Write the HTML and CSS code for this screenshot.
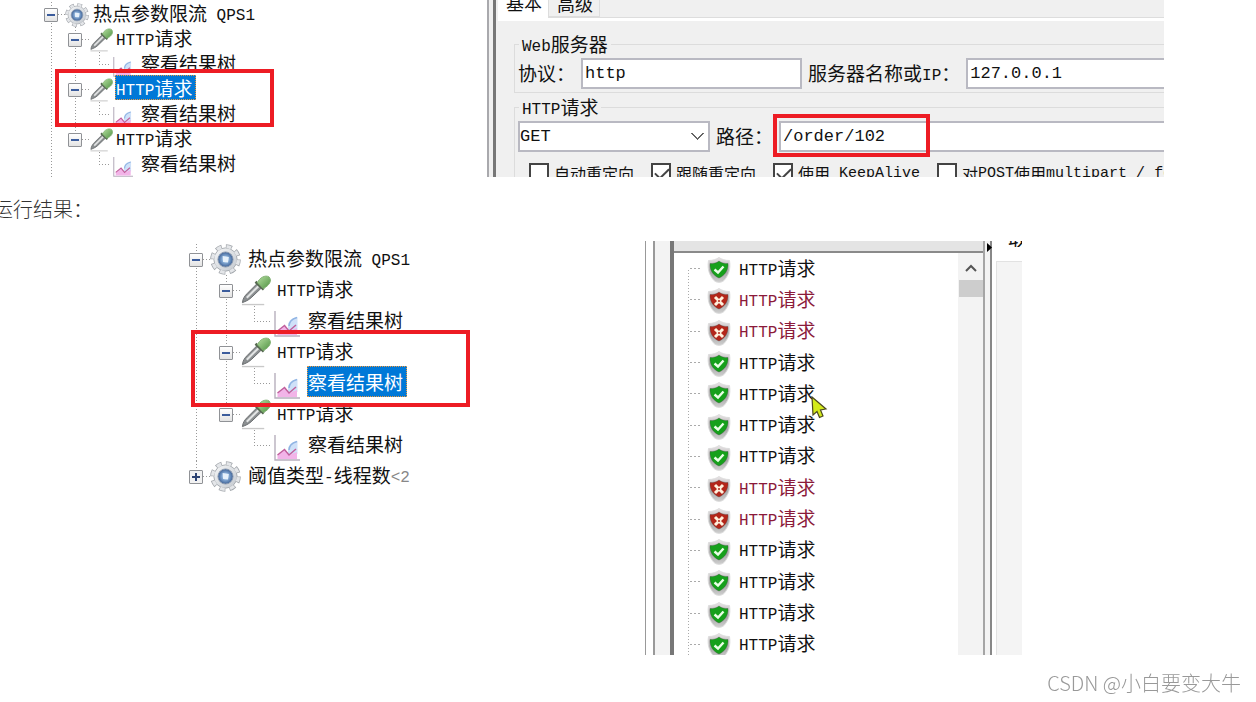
FILE: index.html
```
<!doctype html>
<html lang="zh-CN">
<head>
    <meta charset="UTF-8">
    <meta name="viewport" content="width=device-width,initial-scale=1">
    <title>热点参数限流</title>
    <link rel="stylesheet" href="styles.css">
</head>
<body>
    <svg class="sprite" width="0" height="0" aria-hidden="true">
        <defs>
            <linearGradient id="steel" x1="0" y1="0" x2="1" y2="1">
                <stop offset="0" stop-color="#f6f7f8"/>
                <stop offset="1" stop-color="#c3c8ce"/>
            </linearGradient>
            <radialGradient id="hub">
                <stop offset="0" stop-color="#e4f1fc"/>
                <stop offset=".45" stop-color="#83a9d4"/>
                <stop offset="1" stop-color="#3f6296"/>
            </radialGradient>
            <linearGradient id="bulb" x1="0" y1="0" x2="1" y2="1">
                <stop offset="0" stop-color="#b5dfa0"/>
                <stop offset="1" stop-color="#4f9142"/>
            </linearGradient>
            <linearGradient id="rim" x1="0" y1="0" x2="0" y2="1">
                <stop offset="0" stop-color="#e9e4e6"/>
                <stop offset=".6" stop-color="#aaa"/>
                <stop offset="1" stop-color="#d0d0d0"/>
            </linearGradient>
            <symbol id="gear" viewBox="0 0 32 32">
                <circle cx="16" cy="16" r="13.3" fill="none" stroke="#a3a7ac" stroke-width="5" stroke-dasharray="6.2 4.246"/>
                <circle cx="16" cy="16" r="12" fill="url(#steel)" stroke="#a9adb3"/>
                <circle cx="16" cy="16" r="13.3" fill="none" stroke="#e4e6e9" stroke-width="3.4" stroke-dasharray="4.8 5.646" stroke-dashoffset="-.7"/>
                <circle cx="16" cy="16" r="7.8" fill="url(#hub)" stroke="#8d9cb1"/>
                <path d="M13 12.500 L19.500 13.500 L18.500 19 L13.500 18.500 Z" fill="#e6f1fb"/>
            </symbol>
            <symbol id="dropper" viewBox="0 0 32 32">
                <path d="M2 30.5 H25" stroke="#c9c9c9" stroke-width="1.4"/>
                <path d="M2.5 28.5 C3 24 5 21.5 7.5 19 L18 8.5 L22.5 13 L11.5 23.5 C8 26.5 6 27 2.5 28.5 Z" fill="#8b8f91" stroke="#66696b"/>
                <path d="M7 23.5 L19 11.5" stroke="#e2e4e4" stroke-width="2.2"/>
                <path d="M16 7 L24.5 15" stroke="#53664e" stroke-width="2.600"/>
                <path d="M18 8 C20 3 26 -.5 30 2 C33.500 6 30 11 24 14 Z" fill="url(#bulb)" stroke="#7fae70"/>
            </symbol>
            <symbol id="chart" viewBox="0 0 26 26">
                <path d="M1 0 V25 H26" fill="none" stroke="#b7afbd" stroke-width="1.4"/>
                <path d="M14 16 C14 9 18 7 23.5 6 V19 H14 Z" fill="#cfe1f8"/>
                <path d="M15 15 C15 10 18 8 23 6.500" fill="none" stroke="#90b4e3" stroke-width="1.5"/>
                <path d="M3.500 24 V20 L10.500 14.500 L15 20 L23 17 V24 Z" fill="#f2b4e8"/>
                <path d="M3.500 20 L10.500 14.500 L15 20 L22 14" fill="none" stroke="#c05f9c" stroke-width="1.500"/>
            </symbol>
            <symbol id="shield" viewBox="0 0 24 26">
                <path d="M12 .5 C15 2.500 18 3.500 22.500 3.500 C24 13 21 19 17 23.500 C14 26 10 26 7 23.500 C3 19 0 13 1.500 3.500 C6 3.500 9 2.500 12 .5 Z" fill="url(#rim)" stroke="#ddd"/>
                <path d="M12 4 C14.500 6 17 6.500 21 6.500 C21.500 13 18 18.500 12 21 C6 18.500 2.500 13 3 6.500 C7 6.500 9.500 6 12 4 Z" fill="currentColor" stroke="#444" stroke-opacity=".35"/>
            </symbol>
            <symbol id="pass" viewBox="0 0 24 26">
                <use href="#shield"/>
                <path d="M7.500 12.500 L11 15.500 L16.500 9.500" fill="none" stroke="#e9ffe6" stroke-width="2.400"/>
            </symbol>
            <symbol id="fail" viewBox="0 0 24 26">
                <use href="#shield"/>
                <path d="M8 9 L16 17 M16 9 L8 17" fill="none" stroke="#fff0dc" stroke-width="3"/>
                <circle cx="12" cy="13" r="1" fill="#b3261a"/>
            </symbol>
        </defs>
    </svg>

    <main class="article">
        <section class="shot shot-config">
            <div class="tree-pane">
                <ul class="tree">
                    <li>
                        <div class="row"><button class="toggle" aria-label="折叠"></button><i class="dash"></i><svg class="icon"><use href="#gear"/></svg><span class="label label-root">热点参数限流<b> QPS1</b></span></div>
                        <ul>
                            <li>
                                <div class="row"><button class="toggle" aria-label="折叠"></button><i class="dash"></i><svg class="icon"><use href="#dropper"/></svg><span class="label"><b>HTTP</b>请求</span></div>
                                <ul>
                                    <li><div class="row"><i class="dash dash-leaf"></i><svg class="icon icon-leaf"><use href="#chart"/></svg><span class="label">察看结果树</span></div></li>
                                </ul>
                            </li>
                            <li>
                                <div class="row"><button class="toggle" aria-label="折叠"></button><i class="dash"></i><svg class="icon"><use href="#dropper"/></svg><span class="label selected"><b>HTTP</b>请求</span></div>
                                <ul>
                                    <li><div class="row"><i class="dash dash-leaf"></i><svg class="icon icon-leaf"><use href="#chart"/></svg><span class="label">察看结果树</span></div></li>
                                </ul>
                            </li>
                            <li>
                                <div class="row"><button class="toggle" aria-label="折叠"></button><i class="dash"></i><svg class="icon"><use href="#dropper"/></svg><span class="label"><b>HTTP</b>请求</span></div>
                                <ul>
                                    <li><div class="row"><i class="dash dash-leaf"></i><svg class="icon icon-leaf"><use href="#chart"/></svg><span class="label">察看结果树</span></div></li>
                                </ul>
                            </li>
                        </ul>
                    </li>
                </ul>
                <div class="mark mark-request"></div>
            </div>

            <div class="splitter"></div>

            <form class="config">
                <div class="tabs">
                    <button type="button" class="tab active">基本</button>
                    <button type="button" class="tab">高级</button>
                </div>
                <div class="config-body">
                    <fieldset>
                        <legend><b>Web</b>服务器</legend>
                        <div class="fields">
                            <label for="protocol">协议：</label>
                            <input class="text protocol" id="protocol" type="text" value="http">
                            <label for="server">服务器名称或<b>IP</b>：</label>
                            <input class="text grow" id="server" type="text" value="127.0.0.1">
                        </div>
                    </fieldset>
                    <fieldset>
                        <legend><b>HTTP</b>请求</legend>
                        <div class="fields">
                            <select class="text method" aria-label="方法">
                                <option>GET</option>
                            </select>
                            <label for="path">路径：</label>
                            <div class="path">
                                <input class="text" id="path" type="text" value="/order/102">
                                <div class="mark mark-path"></div>
                            </div>
                        </div>
                        <div class="checks">
                            <label><input type="checkbox">自动重定向</label>
                            <label><input type="checkbox" checked>跟随重定向</label>
                            <label><input type="checkbox" checked>使用<b> KeepAlive</b></label>
                            <label><input type="checkbox">对<b>POST</b>使用<b>multipart / form-data</b></label>
                        </div>
                    </fieldset>
                </div>
            </form>
        </section>

        <p class="caption">运行结果：</p>

        <section class="shot shot-result">
            <div class="tree-pane">
                <ul class="tree tree-lg">
                    <li>
                        <div class="row"><button class="toggle" aria-label="折叠"></button><i class="dash"></i><svg class="icon"><use href="#gear"/></svg><span class="label label-root">热点参数限流<b> QPS1</b></span></div>
                        <ul>
                            <li>
                                <div class="row"><button class="toggle" aria-label="折叠"></button><i class="dash"></i><svg class="icon"><use href="#dropper"/></svg><span class="label"><b>HTTP</b>请求</span></div>
                                <ul>
                                    <li><div class="row"><i class="dash dash-leaf"></i><svg class="icon icon-leaf"><use href="#chart"/></svg><span class="label">察看结果树</span></div></li>
                                </ul>
                            </li>
                            <li>
                                <div class="row"><button class="toggle" aria-label="折叠"></button><i class="dash"></i><svg class="icon"><use href="#dropper"/></svg><span class="label"><b>HTTP</b>请求</span></div>
                                <ul>
                                    <li><div class="row"><i class="dash dash-leaf"></i><svg class="icon icon-leaf"><use href="#chart"/></svg><span class="label selected">察看结果树</span></div></li>
                                </ul>
                            </li>
                            <li>
                                <div class="row"><button class="toggle" aria-label="折叠"></button><i class="dash"></i><svg class="icon"><use href="#dropper"/></svg><span class="label"><b>HTTP</b>请求</span></div>
                                <ul>
                                    <li><div class="row"><i class="dash dash-leaf"></i><svg class="icon icon-leaf"><use href="#chart"/></svg><span class="label">察看结果树</span></div></li>
                                </ul>
                            </li>
                        </ul>
                    </li>
                    <li>
                        <div class="row"><button class="toggle closed" aria-label="展开"></button><i class="dash"></i><svg class="icon"><use href="#gear"/></svg><span class="label label-root">阈值类型<b>-</b>线程数<b class="dim">&lt;2</b></span></div>
                    </li>
                </ul>
                <div class="mark mark-listener"></div>
            </div>

            <div class="splitter splitter-wide"></div>

            <div class="results">
                <div class="results-head"></div>
                <div class="results-body">
                    <ul class="samples">
                        <li class="ok"><svg><use href="#pass"/></svg><span><b>HTTP</b>请求</span></li>
                        <li class="bad"><svg><use href="#fail"/></svg><span><b>HTTP</b>请求</span></li>
                        <li class="bad"><svg><use href="#fail"/></svg><span><b>HTTP</b>请求</span></li>
                        <li class="ok"><svg><use href="#pass"/></svg><span><b>HTTP</b>请求</span></li>
                        <li class="ok"><svg><use href="#pass"/></svg><span><b>HTTP</b>请求</span></li>
                        <li class="ok"><svg><use href="#pass"/></svg><span><b>HTTP</b>请求</span></li>
                        <li class="ok"><svg><use href="#pass"/></svg><span><b>HTTP</b>请求</span></li>
                        <li class="bad"><svg><use href="#fail"/></svg><span><b>HTTP</b>请求</span></li>
                        <li class="bad"><svg><use href="#fail"/></svg><span><b>HTTP</b>请求</span></li>
                        <li class="ok"><svg><use href="#pass"/></svg><span><b>HTTP</b>请求</span></li>
                        <li class="ok"><svg><use href="#pass"/></svg><span><b>HTTP</b>请求</span></li>
                        <li class="ok"><svg><use href="#pass"/></svg><span><b>HTTP</b>请求</span></li>
                        <li class="ok"><svg><use href="#pass"/></svg><span><b>HTTP</b>请求</span></li>
                    </ul>
                    <div class="scrollbar">
                        <svg width="14" height="10" viewBox="0 0 14 10"><path d="M2 8 L7 3 L12 8" fill="none" stroke="#555" stroke-width="2"/></svg>
                        <div class="thumb"></div>
                    </div>
                </div>
                <svg class="cursor" width="18" height="24" viewBox="0 0 18 24"><path d="M2 1 L16 13 L10.500 14 L13 20 L9.500 21.500 L7 15.500 L3 19 Z" fill="#d3ea1b" stroke="#4c4a20" stroke-width="1.200"/></svg>
            </div>

            <div class="divider"><svg width="5" height="9" viewBox="0 0 5 9"><path d="M0 0 L5 4.500 L0 9 Z"/></svg></div>

            <div class="side">
                <div class="side-tab">取</div>
                <div class="side-body"></div>
            </div>
        </section>
    </main>

    <div class="watermark">CSDN @小白要变大牛</div>
</body>
</html>
```
FILE: styles.css
```
* {
    box-sizing: border-box;
}

body {
    margin: 0;
    overflow: hidden;
    background: #fff;
    color: #111;
    font: 19px/24px "Noto Sans CJK SC", sans-serif;
}

ul {
    margin: 0;
    padding: 0;
    list-style: none;
}

b {
    font: 16px/1 "Liberation Mono", monospace;
    vertical-align: 1px;
    white-space: pre;
}

.sprite {
    position: absolute;
}

.article {
    margin-right: 92px;
}

.shot {
    display: flex;
    overflow: hidden;
}

.shot-config {
    height: 177px;
}

.shot-result {
    height: 414px;
    padding-right: 142px;
}

.tree-pane {
    position: relative;
    flex: none;
}

.shot-config .tree-pane {
    width: 487px;
    padding: 2px 0 0 51px;
}

.shot-result .tree-pane {
    width: 645px;
    padding: 3px 0 0 196px;
}

/* tree */
.tree {
    --row: 25px;
    --icon: 24px;
    --leaf: 20px;
    --step: 24px;
    --leaf-step: 24px;
    --leaf-dash: 12px;
}

.tree-lg {
    --row: 31px;
    --icon: 31px;
    --leaf: 26px;
    --step: 30px;
    --leaf-step: 28px;
    --leaf-dash: 18px;
}

.tree li {
    background: repeating-linear-gradient(#999 0 1px, transparent 1px 3px) no-repeat 0 0 / 1px 100%;
}

.tree li:last-child {
    background-size: 1px calc(var(--row) / 2);
}

.shot-config .tree > li {
    background-size: 1px 100%;
}

.tree ul {
    margin-left: var(--step);
}

.tree ul ul {
    margin-left: var(--leaf-step);
}

.row {
    display: flex;
    align-items: center;
    height: var(--row);
    white-space: nowrap;
}

.toggle {
    flex: none;
    width: 14px;
    height: 14px;
    margin-left: -7px;
    padding: 0;
    border: 1px solid #909296;
    border-radius: 1px;
    background:
        linear-gradient(#3b5c9c, #3b5c9c) no-repeat center / 8px 2px,
        linear-gradient(#fff, #e3e3e3);
}

.toggle.closed {
    background:
        linear-gradient(#2d4372, #2d4372) no-repeat center / 8px 2px,
        linear-gradient(#2d4372, #2d4372) no-repeat center / 2px 8px,
        #f2f2f2;
}

.dash {
    flex: none;
    width: 7px;
    height: 1px;
    background: repeating-linear-gradient(90deg, #999 0 1px, transparent 1px 3px);
}

.dash-leaf {
    width: var(--leaf-dash);
}

.icon {
    flex: none;
    width: var(--icon);
    height: var(--icon);
}

.icon-leaf {
    width: var(--leaf);
    height: var(--leaf);
    margin: 4px 5px 0 2px;
}

.label {
    margin: 0 0 4px 2px;
    border: 1px dotted transparent;
    line-height: 23px;
}

.label-root {
    margin-left: 3px;
}

.tree-lg .label {
    line-height: 29px;
}

.tree-lg .icon:not(.icon-leaf) {
    margin-right: 3px;
}

.selected {
    padding-right: 3px;
    border-color: #f09a3e;
    background: #0078d7;
    color: #fff;
}

.dim {
    color: #888;
}

.mark {
    position: absolute;
    border: 4px solid #ed1c24;
    pointer-events: none;
}

.mark-request {
    top: 69px;
    left: 55px;
    width: 219px;
    height: 58px;
}

.mark-listener {
    top: 89px;
    left: 191px;
    width: 279px;
    height: 77px;
}

.mark-path {
    top: -7px;
    left: -6px;
    width: 157px;
    height: 43px;
}

/* request form */
.splitter {
    flex: none;
    width: 9px;
    border-left: 2px solid #a9a9ad;
    border-right: 3px solid #777;
    background: #f0f0f0;
}

.config {
    flex: 1;
    min-width: 0;
    padding-left: 2px;
    background: #f0f0f0;
}

.tabs {
    display: flex;
    height: 21px;
    border-bottom: 3px solid #fff;
    background: linear-gradient(#ddd, #ddd) no-repeat bottom / 100% 1px;
}

.tab {
    height: 17px;
    padding: 0 6px 10px 8px;
    border: solid #ddd;
    border-width: 0 1px 1px 0;
    background: #f0f0f0;
    color: #111;
    font: inherit;
    font-size: 18px;
    line-height: 4px;
}

.tab.active {
    height: 18px;
    padding-bottom: 14px;
    border-width: 0 1px 0 0;
    background: #fff;
}

.config-body {
    padding: 11px 0 0 16px;
}

fieldset {
    min-width: 0;
    margin: 0 0 2px;
    padding: 2px 0 3px 3px;
    border: 1px solid #dcdcdc;
    border-right: 0;
}

legend {
    margin-left: 1px;
    padding: 0 3px;
    line-height: 24px;
}

.fields {
    display: flex;
    align-items: center;
    gap: 6px;
    white-space: nowrap;
}

.fields label {
    padding-bottom: 2px;
}

.text {
    height: 31px;
    padding: 0 2px;
    border: 2px solid #b9b9c2;
    border-radius: 0;
    background: #fff;
    color: #111;
    font: 17px "Liberation Mono", monospace;
}

.protocol {
    width: 221px;
}

.grow {
    flex: 1;
    min-width: 0;
    border-right: 0;
}

.method {
    width: 192px;
    padding: 0;
    appearance: none;
    background:
        linear-gradient(45deg, transparent 44%, #666 44% 58%, transparent 58%) no-repeat right 10px center / 7px 7px,
        linear-gradient(-45deg, transparent 44%, #666 44% 58%, transparent 58%) no-repeat right 4px center / 7px 7px,
        #fff;
}

.path {
    position: relative;
    flex: 1;
}

.path .text {
    width: 100%;
    border-right: 0;
}

.checks {
    display: flex;
    gap: 17px;
    height: 24px;
    padding: 9px 0 0 11px;
    font-size: 16px;
    line-height: 24px;
    white-space: nowrap;
}

.checks label {
    display: flex;
    flex: none;
    align-items: center;
    height: 24px;
}

.checks b {
    font-size: 15px;
}

.checks input {
    width: 20px;
    height: 20px;
    margin: 0 5px 0 0;
    appearance: none;
    border: 2px solid #444;
    background: #fff;
}

.checks input:checked::before {
    content: "";
    display: block;
    width: 12px;
    height: 6px;
    margin: 3px 0 0 2px;
    border: solid #444;
    border-width: 0 0 2px 2px;
    transform: rotate(-45deg);
}

.caption {
    margin: 20px 0 20px -7px;
    color: #333;
    font-size: 20px;
    font-weight: 300;
}

/* sampler results */
.splitter-wide {
    width: 29px;
    border-left: 1px solid #999;
    border-right: 4px solid #777;
    background: linear-gradient(90deg, #fff 7px, #999 7px 9px, #f3f3f3 9px);
}

.results {
    position: relative;
    display: flex;
    flex: 1;
    flex-direction: column;
    min-width: 0;
}

.results-head {
    flex: none;
    height: 12px;
    border-bottom: 2px solid #8a8a8a;
    background: #e4e4e4;
}

.results-body {
    display: flex;
    flex: 1;
    min-height: 0;
    padding-left: 14px;
}

.samples {
    display: grid;
    flex: 1;
    grid-auto-rows: 1fr;
    margin-bottom: -5px;
    background: repeating-linear-gradient(#aaa 0 1px, transparent 1px 3px) no-repeat 0 17px / 1px 100%;
}

.samples li {
    display: flex;
    align-items: center;
    background: repeating-linear-gradient(90deg, #aaa 0 2px, transparent 2px 4px) no-repeat 2px center / 11px 1px;
}

.samples svg {
    width: 24px;
    height: 26px;
    margin: 3px 8px 0 19px;
}

.samples span {
    padding-bottom: 2px;
}

.ok svg {
    color: #16a01b;
}

.bad {
    color: #8b1a3a;
}

.bad svg {
    color: #b3261a;
}

.scrollbar {
    display: flex;
    flex: none;
    flex-direction: column;
    align-items: center;
    width: 25px;
    padding-top: 10px;
    background: #f3f3f3;
}

.thumb {
    width: 24px;
    height: 17px;
    margin-top: 7px;
    background: #cdcdcd;
}

.cursor {
    position: absolute;
    top: 155px;
    left: 136px;
}

.divider {
    flex: none;
    width: 9px;
    border-left: 2px solid #a5a5a5;
    border-right: 2px solid #888;
    background: #f3f3f3;
}

.divider svg {
    display: block;
    margin: 2px 0 0 2px;
}

.side {
    display: flex;
    flex: none;
    flex-direction: column;
    width: 30px;
    padding-left: 4px;
}

.side-tab {
    display: flex;
    align-items: flex-end;
    height: 6px;
    margin-bottom: 14px;
    padding-left: 12px;
    overflow: hidden;
    line-height: 18px;
}

.side-body {
    flex: 1;
    border: solid #e2e2e2;
    border-width: 1px 0 0 1px;
    background: #f4f4f4;
}

.watermark {
    position: fixed;
    right: 15px;
    bottom: 7px;
    color: #999;
    font-size: 20px;
    font-weight: 300;
}
```
